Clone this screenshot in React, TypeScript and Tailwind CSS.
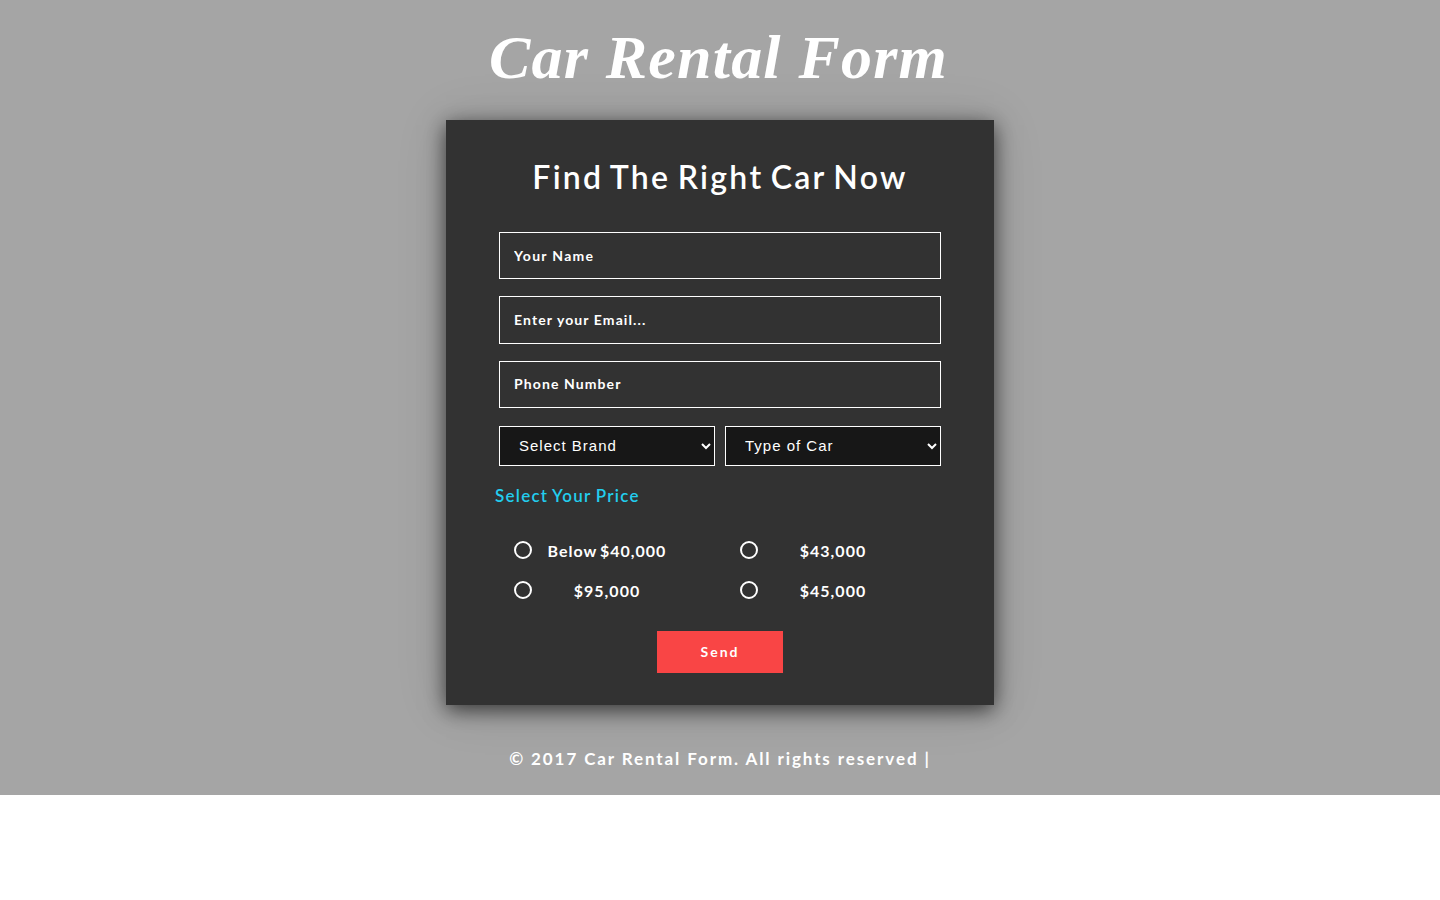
import { useState } from 'react';

const fields = [
  { name: 'name', type: 'text', placeholder: 'Your Name', className: 'h-[47px] mb-[17px] tracking-[1.3px] pb-px' },
  { name: 'email', type: 'email', placeholder: 'Enter your Email...', className: 'h-[48px] mb-[17px] tracking-[1.1px] pb-[2px]' },
  { name: 'phone', type: 'text', placeholder: 'Phone Number', className: 'h-[47px] mb-[18px] tracking-[1.1px] pb-[2px]' },
];

const selects = [
  { name: 'brand', options: ['Select Brand', 'Audi', 'BMW', 'Toyota'] },
  { name: 'type', options: ['Type of Car', 'Sedan', 'Hatchback', 'SUV'] },
];

const prices = ['Below $40,000', '$43,000', '$95,000', '$45,000'];

const App = () => {
  const [price, setPrice] = useState('');

  return (
    <div className="h-[795px] w-full flex flex-col items-center bg-[#a5a5a5] text-white font-['Lato',sans-serif]">
      <h1 className="h-[120px] pt-[23px] pr-[3px] text-[62px] leading-[68px] tracking-[1.2px] font-bold italic whitespace-nowrap font-['Liberation_Serif',serif]">
        Car Rental Form
      </h1>
      <main className="w-[548px] h-[585px] shrink-0 px-[53px] bg-[#323232] shadow-[0_5px_20px_rgba(0,0,0,0.65),0_2px_50px_rgba(0,0,0,0.12)]">
        <h2 className="h-[112px] pt-[37px] text-[32px] leading-[40px] tracking-[2.3px] [word-spacing:-3px] font-semibold text-center whitespace-nowrap">
          Find The Right Car Now
        </h2>
        <form onSubmit={(e) => e.preventDefault()}>
          {fields.map((field) => (
            <input
              key={field.name}
              name={field.name}
              type={field.type}
              placeholder={field.placeholder}
              className={`block w-full px-[14px] border border-white bg-transparent text-[14px] font-bold placeholder:text-white outline-none ${field.className}`}
            />
          ))}
          <div className="flex gap-[10px]">
            {selects.map((select) => (
              <select
                key={select.name}
                name={select.name}
                className="w-[216px] h-10 pl-[15px] pb-[2px] border border-white bg-[#171717] text-[15px] tracking-[1px] font-['Liberation_Sans',sans-serif] outline-none"
              >
                {select.options.map((option) => (
                  <option key={option}>{option}</option>
                ))}
              </select>
            ))}
          </div>
          <h3 className="-ml-1 h-16 pt-[18px] text-[17px] leading-6 tracking-[1.25px] [word-spacing:-1px] font-semibold text-[#22cdee]">
            Select Your Price
          </h3>
          <div className="grid grid-cols-[226px_216px]">
            {prices.map((item) => (
              <label key={item} className="h-10 pl-[15px] flex items-center cursor-pointer">
                <input
                  type="radio"
                  name="price"
                  checked={price === item}
                  onChange={() => setPrice(item)}
                  className="appearance-none size-[18px] rounded-full border-2 border-white checked:bg-[#f94545]"
                />
                <span className="ml-[10px] w-[130px] pt-px text-center text-[16px] tracking-[1px] [word-spacing:-2px] font-bold whitespace-nowrap">
                  {item}
                </span>
              </label>
            ))}
          </div>
          <button
            type="submit"
            className="block w-[126px] h-[42px] mt-[21px] mx-auto pb-px bg-[#f94545] text-[14px] tracking-[2px] font-bold"
          >
            Send
          </button>
        </form>
      </main>
      <footer className="pt-[42px] text-[17px] leading-6 tracking-[1.9px] font-bold whitespace-nowrap">
        © 2017 Car Rental Form. All rights reserved |
      </footer>
    </div>
  );
};

export default App;
